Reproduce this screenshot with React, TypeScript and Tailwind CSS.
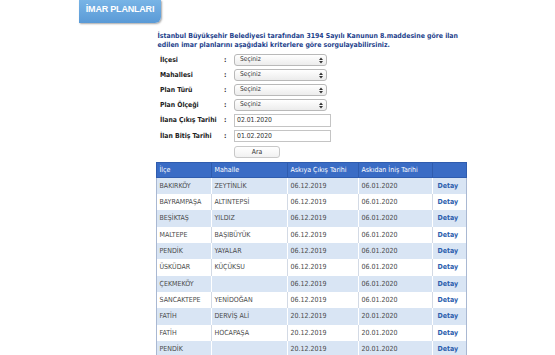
import React from "react";

const rows = [
  ["BAKIRKÖY", "ZEYTİNLİK", "06.12.2019", "06.01.2020"],
  ["BAYRAMPAŞA", "ALTINTEPSİ", "06.12.2019", "06.01.2020"],
  ["BEŞİKTAŞ", "YILDIZ", "06.12.2019", "06.01.2020"],
  ["MALTEPE", "BAŞIBÜYÜK", "06.12.2019", "06.01.2020"],
  ["PENDİK", "YAYALAR", "06.12.2019", "06.01.2020"],
  ["ÜSKÜDAR", "KÜÇÜKSU", "06.12.2019", "06.01.2020"],
  ["ÇEKMEKÖY", "", "06.12.2019", "06.01.2020"],
  ["SANCAKTEPE", "YENİDOĞAN", "06.12.2019", "06.01.2020"],
  ["FATİH", "DERVİŞ ALİ", "20.12.2019", "20.01.2020"],
  ["FATİH", "HOCAPAŞA", "20.12.2019", "20.01.2020"],
  ["PENDİK", "", "20.12.2019", "20.01.2020"],
];

const selects = ["İlçesi", "Mahallesi", "Plan Türü", "Plan Ölçeği"];
const dates = [
  ["İlana Çıkış Tarihi", "02.01.2020"],
  ["İlan Bitiş Tarihi", "01.02.2020"],
];

function Select() {
  return (
    <div className="flex items-center justify-between w-[93px] h-[11.5px] border border-[#b9b9b9] rounded-[3px] bg-gradient-to-b from-white to-[#ececec] pl-[5px] pr-[3px] text-[6.6px] font-normal text-[#333]">
      <span>Seçiniz</span>
      <svg width="4" height="7" viewBox="0 0 4 7">
        <path d="M0 3 L2 0.5 L4 3 Z M0 4 L2 6.5 L4 4 Z" fill="#333" />
      </svg>
    </div>
  );
}

export default function App() {
  return (
    <div className="w-[555px] h-[355px] overflow-hidden bg-white font-['DejaVu_Sans_Condensed','Liberation_Sans',sans-serif]">
      <div className="pl-[79px]">
        <div className="w-[82px] h-[23px] rounded-br-[6px] bg-gradient-to-b from-[#78b4e6] to-[#5a9ad6] shadow-[1px_1px_2px_rgba(0,0,0,0.35)] flex items-center justify-center">
          <span className="text-white font-bold text-[9px] tracking-[-0.2px] font-['Liberation_Sans',sans-serif] -mt-[4px]">
            İMAR PLANLARI
          </span>
        </div>
      </div>

      <div className="ml-[155.5px] w-[310px]">
        <p className="mt-[9px] pl-[2px] text-[6.9px] leading-[9px] font-bold text-[#1d3f8c] whitespace-nowrap">
          İstanbul Büyükşehir Belediyesi tarafından 3194 Sayılı Kanunun 8.maddesine göre ilan
          <br />
          edilen imar planlarını aşağıdaki kriterlere göre sorgulayabilirsiniz.
        </p>

        <div className="mt-[2.6px] pl-[4.5px]">
          {selects.map((label) => (
            <div key={label} className="flex items-center h-[15px] text-[6.8px] font-bold text-[#222]">
              <span className="w-[64px]">{label}</span>
              <span className="w-[10px]">:</span>
              <Select />
            </div>
          ))}
          {dates.map(([label, value]) => (
            <div key={label} className="flex items-center h-[15.5px] text-[6.8px] font-bold text-[#222]">
              <span className="w-[64px] whitespace-nowrap">{label}</span>
              <span className="w-[10px]">:</span>
              <div className="flex items-center w-[97px] h-[12.5px] border border-[#c4c4c4] bg-white pl-[2px] font-normal text-[#333]">
                {value}
              </div>
            </div>
          ))}
          <div className="flex mt-[2px]">
            <div className="ml-[74px] w-[46px] h-[12px] rounded-[3px] border border-[#c8c8c8] bg-gradient-to-b from-white to-[#f1f1f1] flex items-center justify-center text-[6.8px] text-[#333]">
              Ara
            </div>
          </div>
        </div>

        <table className="mt-[4.6px] w-[310px] border-collapse text-[7px] text-[#4a4a4a] table-fixed">
          <colgroup>
            <col className="w-[55px]" />
            <col className="w-[76px]" />
            <col className="w-[71px]" />
            <col className="w-[74px]" />
            <col className="w-[34px]" />
          </colgroup>
          <thead>
            <tr className="h-[15px] bg-[#3a6cc5] text-white text-left">
              <th className="font-normal pl-[3px] border border-[#2f5cae]">İlçe</th>
              <th className="font-normal pl-[3px] border border-[#2f5cae]">Mahalle</th>
              <th className="font-normal pl-[3px] border border-[#2f5cae]">Askıya Çıkış Tarihi</th>
              <th className="font-normal pl-[3px] border border-[#2f5cae]">Askıdan İniş Tarihi</th>
              <th className="font-normal border border-[#2f5cae]"></th>
            </tr>
          </thead>
          <tbody>
            {rows.map((r, i) => {
              const blue = i % 2 === 0;
              return (
                <tr key={i} className={blue ? "h-[16.33px] bg-[#d9e5f4]" : "h-[16.33px] bg-white"}>
                  {r.map((c, j) => (
                    <td
                      key={j}
                      className={
                        blue
                          ? "pl-[3px] border-l border-white first:border-l-[#a9b8d2]"
                          : "pl-[3px] border-l border-[#d3dae5] first:border-l-[#a9b8d2]"
                      }
                    >
                      {c}
                    </td>
                  ))}
                  <td
                    className={
                      blue
                        ? "pl-[5px] border-l border-r border-white border-r-[#a9b8d2] font-bold text-[#2c5ead]"
                        : "pl-[5px] border-l border-r border-[#d3dae5] border-r-[#a9b8d2] font-bold text-[#2c5ead]"
                    }
                  >
                    Detay
                  </td>
                </tr>
              );
            })}
          </tbody>
        </table>
      </div>
    </div>
  );
}
